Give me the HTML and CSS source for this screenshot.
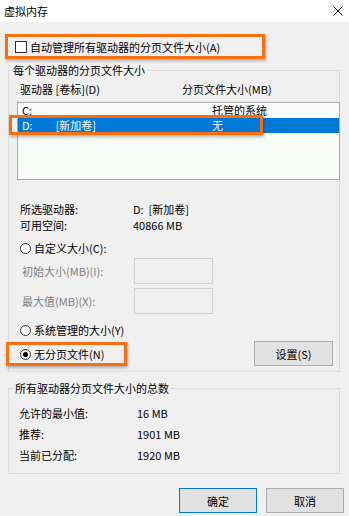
FILE: index.html
```html
<!DOCTYPE html>
<html>
<head>
    <meta charset="utf-8">
    <title>虚拟内存</title>
    <link rel="stylesheet" href="styles.css">
</head>
<body>
    <div class="titlebar">
        <span class="title">虚拟内存</span>
        <svg class="close" width="10" height="10" viewBox="0 0 10 10">
            <path d="M0.5 0.5 L9.5 9.5 M9.5 0.5 L0.5 9.5" stroke="#000" stroke-width="1" fill="none"/>
        </svg>
    </div>

    <div class="auto-row mark">
        <span class="checkbox"></span>
        <span>自动管理所有驱动器的分页文件大小(A)</span>
    </div>

    <fieldset class="group drives">
        <legend>每个驱动器的分页文件大小</legend>

        <div class="list-head">
            <span>驱动器 [卷标](D)</span>
            <span>分页文件大小(MB)</span>
        </div>

        <div class="listbox">
            <div class="list-row">
                <span>C:</span>
                <span>托管的系统</span>
            </div>
            <div class="list-row selected">
                <span>D:<span class="volume">[新加卷]</span></span>
                <span>无</span>
                <span class="row-mark"></span>
            </div>
        </div>

        <div class="info">
            <div class="info-row"><span class="info-label">所选驱动器:</span><span>D:&nbsp;&nbsp;[新加卷]</span></div>
            <div class="info-row"><span class="info-label">可用空间:</span><span>40866 MB</span></div>
        </div>

        <div class="radio-row custom">
            <span class="radio"></span>
            <span>自定义大小(C):</span>
        </div>

        <div class="size-row first">
            <span class="size-label">初始大小(MB)(I):</span>
            <span class="size-input"></span>
        </div>
        <div class="size-row">
            <span class="size-label">最大值(MB)(X):</span>
            <span class="size-input"></span>
        </div>

        <div class="radio-row system">
            <span class="radio"></span>
            <span>系统管理的大小(Y)</span>
        </div>

        <div class="bottom-row">
            <div class="radio-row none mark">
                <span class="radio checked"></span>
                <span>无分页文件(N)</span>
            </div>
            <button class="btn set-btn">设置(S)</button>
        </div>
    </fieldset>

    <fieldset class="group totals">
        <legend>所有驱动器分页文件大小的总数</legend>
        <div class="total-row"><span class="total-label">允许的最小值:</span><span>16 MB</span></div>
        <div class="total-row"><span class="total-label">推荐:</span><span>1901 MB</span></div>
        <div class="total-row"><span class="total-label">当前已分配:</span><span>1920 MB</span></div>
    </fieldset>

    <div class="actions">
        <button class="btn btn-default">确定</button>
        <button class="btn">取消</button>
    </div>
</body>
</html>
```

FILE: styles.css
```css
body {
    margin: 0;
    width: 349px;
    height: 516px;
    overflow: hidden;
    background: #f0f0f0;
    font-family: "Noto Sans CJK SC", "Noto Sans", sans-serif;
    font-size: 11px;
    line-height: 14px;
    color: #000;
}
.titlebar {
    height: 22px;
    background: #fff;
    display: flex;
    align-items: center;
    justify-content: space-between;
    padding: 0 6px 0 4px;
}
.title {
    font-size: 11px;
}
.close {
    margin-top: -1px;
}
.mark {
    border: 3px solid #f8700f;
    box-shadow: 1px 2px 3px rgba(0,0,0,0.28);
}
.auto-row {
    box-sizing: border-box;
    margin: 12px 0 0 5px;
    width: 260px;
    height: 25px;
    display: flex;
    align-items: center;
    padding-left: 7px;
    gap: 3px;
}
.checkbox {
    width: 10px;
    height: 10px;
    border: 1px solid #333;
    background: #fff;
}
.group {
    margin: 0 9px 0 8px;
    padding: 0;
    border: 1px solid #dcdcdc;
    min-width: 0;
}
.group legend {
    padding: 0 1px;
    margin-left: 3px;
    line-height: 14px;
}
.drives {
    margin-top: 4px;
    padding-bottom: 5px;
}
.list-head {
    display: grid;
    grid-template-columns: 162px 1fr;
    margin-top: 5px;
    padding-left: 11px;
}
.listbox {
    position: relative;
    box-sizing: border-box;
    height: 78px;
    margin: 6px -1px 0 8px;
    border: 1px solid #a9a9a9;
    background: #f8fbf8;
}
.list-row {
    position: relative;
    display: grid;
    grid-template-columns: 190px 1fr;
    height: 14px;
    line-height: 14px;
    padding-left: 4px;
}
.list-row.selected {
    margin-top: 1px;
    height: 15px;
    line-height: 15px;
    background: #0078d7;
    color: #fff;
}
.volume {
    margin-left: 23px;
}
.row-mark {
    position: absolute;
    left: -9px;
    top: -3px;
    width: 254px;
    height: 20px;
    box-sizing: border-box;
    border: 3px solid #f8700f;
    box-shadow: 1px 2px 3px rgba(0,0,0,0.28);
}
.info {
    margin-top: 21px;
    padding-left: 11px;
}
.info-row {
    display: flex;
    line-height: 16px;
}
.info-label {
    width: 113px;
}
.radio-row {
    display: flex;
    align-items: center;
    gap: 3px;
    padding-left: 11px;
    height: 16px;
}
.custom {
    margin-top: 7px;
}
.system {
    margin-top: 8px;
}
.radio {
    box-sizing: border-box;
    width: 11px;
    height: 11px;
    border: 1px solid #333;
    border-radius: 50%;
    background: #fff;
    display: flex;
    align-items: center;
    justify-content: center;
}
.radio.checked::after {
    content: "";
    width: 5px;
    height: 5px;
    border-radius: 50%;
    background: #000;
}
.size-row {
    display: flex;
    align-items: center;
    height: 26px;
    margin-top: 4px;
    padding-left: 13px;
    color: #808080;
}
.size-row.first {
    margin-top: 2px;
}
.size-label {
    width: 112px;
}
.size-input {
    box-sizing: border-box;
    width: 79px;
    height: 26px;
    border: 1px solid #d0d0d0;
    background: #f0f0f0;
}
.bottom-row {
    display: flex;
    align-items: center;
    justify-content: space-between;
    margin-top: 3px;
    padding-right: 6px;
}
.none {
    box-sizing: border-box;
    margin-left: -3px;
    width: 121px;
    height: 24px;
    padding-left: 11px;
    margin-top: 1px;
}
.btn {
    box-sizing: border-box;
    font-family: inherit;
    font-size: 11px;
    color: #000;
    background: #e1e1e1;
    border: 1px solid #adadad;
    padding: 0;
    height: 25px;
}
.set-btn {
    width: 79px;
}
.totals {
    margin-top: 9px;
    padding-bottom: 7px;
}
.totals legend {
    margin-left: 5px;
}
.total-row {
    display: flex;
    line-height: 21px;
    padding-left: 10px;
}
.total-row:first-of-type {
    margin-top: 8px;
}
.total-label {
    width: 118px;
}
.actions {
    display: flex;
    justify-content: flex-end;
    gap: 9px;
    margin-top: 14px;
    padding-right: 5px;
}
.actions .btn {
    width: 78px;
}
.btn-default {
    border-color: #0078d7;
}
```
